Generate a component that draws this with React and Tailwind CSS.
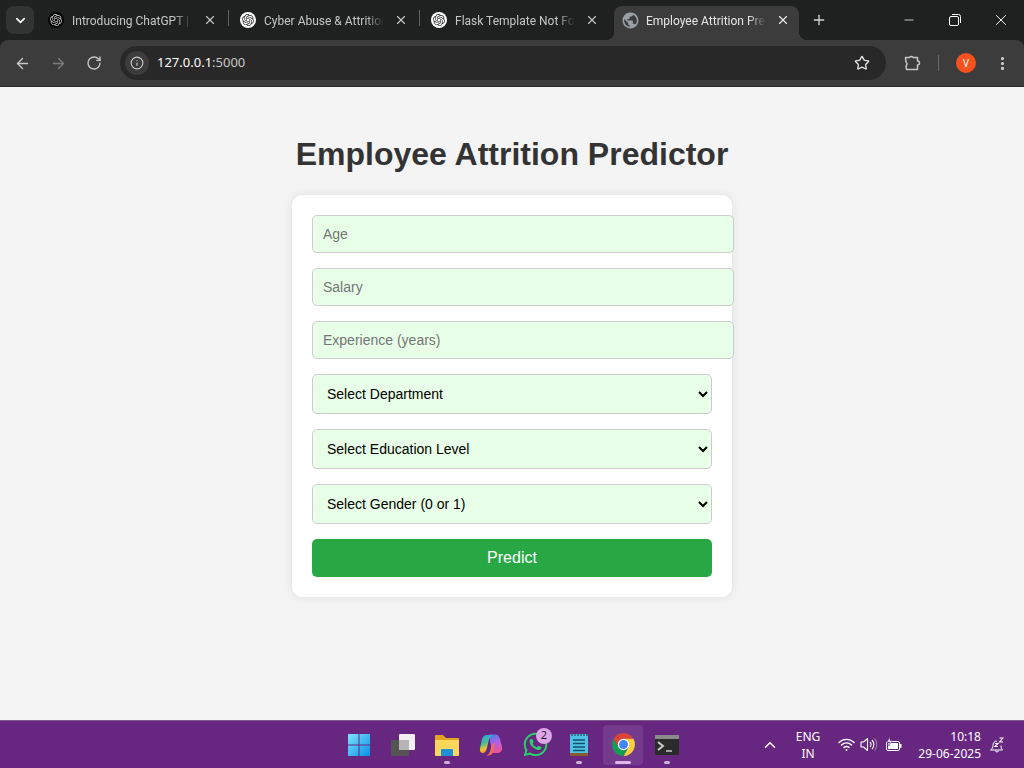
import { ArrowLeft, ArrowRight, RotateCw, Info, Star, EllipsisVertical, ChevronDown, ChevronUp, X, Plus, Minus } from 'lucide-react';
import { SiOpenai } from 'react-icons/si';
import { MdPublic } from 'react-icons/md';
import { FaWhatsapp } from 'react-icons/fa';

const tabs = [
  { title: 'Introducing ChatGPT | OpenAI', icon: 'dark', width: 'w-[192px]', gap: 'ml-[10px]', divider: true },
  { title: 'Cyber Abuse & Attrition Model', icon: 'light', width: 'w-[191px]', gap: 'ml-[9px]', divider: true },
  { title: 'Flask Template Not Found', icon: 'light', width: 'w-[191px]', gap: 'ml-[9px]' },
  { title: 'Employee Attrition Predictor', icon: 'globe', width: 'w-[185px]', gap: 'ml-[9px]', active: true },
];

function TabIcon({ type }) {
  if (type === 'globe') return <MdPublic size={19} className="text-[#9aa0a6] shrink-0 -mx-[1.5px]" />;
  return (
    <span className={`w-4 h-4 rounded-full flex items-center justify-center shrink-0 ${type === 'dark' ? 'bg-black text-[#c8c8c8]' : 'bg-white text-[#333]'}`}>
      <SiOpenai size={12} />
    </span>
  );
}

function Tab({ tab }) {
  return (
    <div className={`relative ${tab.width} h-[34px] flex items-center pl-2 pb-1.5 rounded-t-lg ${tab.active ? 'bg-[#3c3c3c] text-[#e6e6e6]' : 'text-[#c4c7c5]'}`}>
      {tab.active && <span className="absolute -left-2 bottom-0 w-2 h-2 bg-[radial-gradient(circle_at_0_0,transparent_8px,#3c3c3c_8px)]" />}
      {tab.active && <span className="absolute -right-2 bottom-0 w-2 h-2 bg-[radial-gradient(circle_at_100%_0,transparent_8px,#3c3c3c_8px)]" />}
      <TabIcon type={tab.icon} />
      <span className="ml-2 mt-px w-[120px] overflow-hidden whitespace-nowrap font-['Roboto',sans-serif] text-xs [mask-image:linear-gradient(to_right,black_85%,transparent)]">{tab.title}</span>
      <span className={`${tab.gap} w-4 flex justify-center`}><X size={14} strokeWidth={2} /></span>
      {tab.divider && <span className="absolute right-[3px] top-[4px] w-px h-4 bg-[#5f6368]" />}
    </div>
  );
}

function ChromeBar() {
  return (
    <div className="shrink-0 bg-[#1f2121] text-white font-['Noto_Sans',sans-serif]">
      <div className="h-10 flex items-end relative">
        <div className="w-10 h-10 flex items-start pl-1.5 pt-1.5">
          <div className="w-7 h-7 rounded-lg bg-[#323434] flex items-center justify-center"><ChevronDown size={15} strokeWidth={2.5} /></div>
        </div>
        {tabs.map((t) => <Tab key={t.title} tab={t} />)}
        <div className="ml-1 w-8 h-[34px] pb-1.5 flex items-center justify-center text-[#d4d4d4]"><Plus size={16} strokeWidth={2} /></div>
        <div className="ml-auto h-10 flex">
          <div className="w-[46px] flex items-center justify-center"><Minus size={14} strokeWidth={1.25} /></div>
          <div className="w-[46px] flex items-center justify-center">
            <svg width="12" height="12" viewBox="0 0 12 12" fill="none" stroke="white" strokeWidth="1"><rect x="0.5" y="2.5" width="9" height="9" rx="1.5" /><path d="M3 .5h6.5a2 2 0 0 1 2 2V9" /></svg>
          </div>
          <div className="w-[46px] flex items-center justify-center"><X size={18} strokeWidth={1.25} /></div>
        </div>
      </div>
      <div className="h-[47px] bg-[#3c3c3c] rounded-t-lg flex items-center pl-[6px] text-[#c7c7c7] border-b border-[#2a2a2a]">
        <div className="w-8 flex justify-center"><ArrowLeft size={17} /></div>
        <div className="ml-[2px] w-[36px] flex justify-center text-[#7b7b7b]"><ArrowRight size={17} /></div>
        <div className="w-[36px] flex justify-center"><RotateCw size={16} /></div>
        <div className="ml-2 w-[766px] h-[34px] rounded-full bg-[#282828] flex items-center pl-[5px] pr-4">
          <div className="w-6 h-6 rounded-full bg-[#3c3c3c] flex items-center justify-center"><Info size={14} /></div>
          <div className="ml-2 text-[13px] text-white">127.0.0.1<span className="text-[#c7c7c7]">:5000</span></div>
          <Star size={16} className="ml-auto text-[#e3e3e3]" />
        </div>
        <div className="ml-[17px] w-[18px] flex justify-center">
          <svg width="18" height="18" viewBox="0 0 18 18" fill="none" stroke="#c7c7c7" strokeWidth="1.5" strokeLinejoin="round"><path d="M2.500 3.500h4a2 2 0 0 1 3.500 0h4.500v3.500a2 2 0 0 1 0 4v4.500H3.500l-.5-3.500a2.500 2.500 0 0 0 0-4z" /></svg>
        </div>
        <div className="ml-[17px] w-px h-4 bg-[#6a6a6a]" />
        <div className="ml-[17px] w-5 h-5 rounded-full bg-[#f4511e] text-white text-[10px] flex items-center justify-center">V</div>
        <div className="ml-[17px] w-[18px] flex justify-center text-[#d0d0d0]"><EllipsisVertical size={17} strokeWidth={2.5} /></div>
      </div>
    </div>
  );
}

function PredictForm() {
  const inputClass = 'block w-[422px] h-[38px] px-[10px] border border-[#ccc] rounded-[5px] bg-[#e8ffe8] text-sm placeholder:text-[#757575] outline-none';
  const selectClass = 'block w-[400px] h-10 px-[10px] border border-[#ccc] rounded-[5px] bg-[#e8ffe8] text-sm text-black outline-none';
  return (
    <div className="flex-1 min-h-0 bg-[#f4f4f4] flex flex-col items-center pt-[47px] font-['Liberation_Sans',sans-serif]">
      <h1 className="text-[32px] leading-10 font-bold text-[#333] mb-[21px]">Employee Attrition Predictor</h1>
      <form className="w-[440px] p-5 bg-white rounded-[10px] shadow-[0_0_10px_rgba(0,0,0,0.1)] flex flex-col gap-[15px]">
        <input className={inputClass} placeholder="Age" />
        <input className={inputClass} placeholder="Salary" />
        <input className={inputClass} placeholder="Experience (years)" />
        <select className={selectClass}><option>Select Department</option></select>
        <select className={selectClass}><option>Select Education Level</option></select>
        <select className={selectClass}><option>Select Gender (0 or 1)</option></select>
        <button type="button" className="w-[400px] h-[38px] rounded-[5px] bg-[#28a745] text-white text-base">Predict</button>
      </form>
    </div>
  );
}

function TaskIcon({ children, mark, active }) {
  return (
    <div className={`relative w-10 h-10 mx-0.5 rounded flex items-center justify-center ${active ? 'bg-[#743a8b]' : ''}`}>
      {children}
      {mark === 'dot' && <span className="absolute bottom-[1px] w-[6px] h-[3px] rounded-full bg-[#c9b1d3]" />}
      {mark === 'line' && <span className="absolute bottom-[1px] w-4 h-[3px] rounded-full bg-[#e3b3ee]" />}
    </div>
  );
}

function Taskbar() {
  return (
    <div className="shrink-0 h-12 bg-[#67267f] border-t border-[#7c5a89] flex items-center text-white font-['Noto_Sans',sans-serif]">
      <div className="flex-1" />
      <div className="flex ml-[2px]">
        <TaskIcon>
          <svg width="24" height="24" viewBox="0 0 24 24"><defs><linearGradient id="wn" x1="0" y1="0" x2="1" y2="1"><stop offset="0" stopColor="#7fe3fb" /><stop offset="1" stopColor="#0a8fe8" /></linearGradient></defs><path fill="url(#wn)" d="M1 1h10.500v10.500H1zM12.500 1H23v10.500H12.500zM1 12.500h10.500V23H1zM12.500 12.500H23V23H12.500z" /></svg>
        </TaskIcon>
        <TaskIcon>
          <svg width="26" height="24" viewBox="0 0 26 24"><rect x="9" y="1" width="16" height="16" rx="1" fill="#f1f1f1" /><rect x="1" y="7" width="18" height="16" rx="1" fill="#555" /><rect x="9" y="7" width="10" height="10" fill="#b5b5b5" /></svg>
        </TaskIcon>
        <TaskIcon mark="dot">
          <svg width="26" height="24" viewBox="0 0 26 24"><path d="M1 3a1 1 0 0 1 1-1h7l3 3h12a1 1 0 0 1 1 1v3H1z" fill="#e2a520" /><path d="M1 7h24v15a1 1 0 0 1-1 1H2a1 1 0 0 1-1-1z" fill="#fbd75b" /><path d="M8 16h10a1 1 0 0 1 1 1v6H7v-6a1 1 0 0 1 1-1z" fill="#1f8fd6" /></svg>
        </TaskIcon>
        <TaskIcon>
          <svg width="24" height="24" viewBox="0 0 24 24">
            <defs>
              <linearGradient id="cpa" x1="0.2" y1="0" x2="0.5" y2="1"><stop offset="0" stopColor="#2aa8e0" /><stop offset=".45" stopColor="#45c08a" /><stop offset=".75" stopColor="#f7c32e" /><stop offset="1" stopColor="#f0803a" /></linearGradient>
              <linearGradient id="cpb" x1="0.3" y1="0" x2="0.6" y2="1"><stop offset="0" stopColor="#4f7cf0" /><stop offset=".5" stopColor="#b45ee8" /><stop offset="1" stopColor="#f0568c" /></linearGradient>
            </defs>
            <path fill="url(#cpb)" d="M10 1.500h6c2.500 0 4 1.500 4.800 4l2.200 8c.8 3.500-1 6.500-4.500 6.500H13z" />
            <path fill="url(#cpa)" d="M8 2h6c-2 .5-3.300 2-4 4.500l-2.500 10c-.6 2.300-2 3.500-3.500 3.500-2 0-3.500-2-3-5l2-8.500C3.500 3.500 5.500 2 8 2z" />
            <path fill="#f2705a" d="M7 22.500c2-.5 3.500-2 4-4l1.500-5.500c.5-2 2-3 3.500-3 0 .5-.5 1.500-1 3.500l-1.200 5c-.5 2.500-2 4-4.300 4z" />
          </svg>
        </TaskIcon>
        <TaskIcon>
          <FaWhatsapp size={27} className="text-[#25d366]" />
          <span className="absolute top-[3px] right-[3px] w-4 h-4 rounded-full bg-[#dca6e8] text-[#1d1d1d] text-[11px] flex items-center justify-center">2</span>
        </TaskIcon>
        <TaskIcon mark="dot">
          <svg width="20" height="24" viewBox="0 0 20 24"><rect x="1" y="1" width="18" height="22" rx="1" fill="#4ec3e6" /><rect x="1" y="20" width="18" height="3" fill="#8a5a2b" /><path d="M4 7h12M4 10.500h12M4 14h12M4 17.500h12" stroke="#16506a" strokeWidth="1.5" /><path d="M3 1v2M6 1v2M9 1v2M12 1v2M15 1v2M18 1v2" stroke="#17394a" strokeWidth="1" /></svg>
        </TaskIcon>
        <TaskIcon mark="line" active>
          <svg width="25" height="25" viewBox="0 0 48 48">
            <path fill="#db4437" d="M4.950 13A22 22 0 0 1 43.050 13H24L14.470 29.500z" />
            <path fill="#ffcd40" d="M43.050 13A22 22 0 0 1 24 46L33.530 29.500 24 13z" />
            <path fill="#0f9d58" d="M24 46A22 22 0 0 1 4.950 13L14.470 29.500H33.530z" />
            <circle cx="24" cy="24" r="11" fill="#fff" />
            <circle cx="24" cy="24" r="8.500" fill="#4285f4" />
          </svg>
        </TaskIcon>
        <TaskIcon mark="dot">
          <svg width="24" height="22" viewBox="0 0 24 22"><rect y="1" width="24" height="20" rx="1" fill="#2b2b2b" /><rect y="1" width="24" height="4" fill="#8a8a8a" /><path d="M3 8l5 4-5 4" stroke="#ccc" strokeWidth="2" fill="none" /><path d="M11 17h6" stroke="#ccc" strokeWidth="1.5" /></svg>
        </TaskIcon>
      </div>
      <div className="flex-1 flex items-center justify-end">
        <ChevronUp size={18} strokeWidth={2} />
        <div className="ml-[9px] w-[40px] text-xs leading-[17px] text-center">ENG<br />IN</div>
        <svg className="ml-[10px]" width="17" height="17" viewBox="0 0 17 17" fill="none" stroke="white" strokeWidth="1.400" strokeLinecap="round"><path d="M1 6.500a10.500 10.500 0 0 1 15 0M3.500 9a7 7 0 0 1 10 0M6 11.500a3.500 3.500 0 0 1 5 0" /><circle cx="8.500" cy="14" r="1" fill="white" stroke="none" /></svg>
        <svg className="ml-[5px]" width="17" height="17" viewBox="0 0 17 17" fill="none" stroke="white" strokeWidth="1.100"><path d="M1 6h2.500L7.500 2.500v12L3.500 11H1z" strokeLinejoin="round" /><path d="M10 6a3.500 3.500 0 0 1 0 5" /><path d="M12 4a6.500 6.500 0 0 1 0 9" /><path d="M14.500 2.500a9 9 0 0 1 0 12" stroke="#a57db5" /></svg>
        <svg className="ml-2" width="18" height="16" viewBox="0 0 18 16"><rect x="1.500" y="4.500" width="13" height="9" rx="1.500" fill="none" stroke="white" /><rect x="3" y="6" width="10" height="6" fill="white" /><rect x="15" y="7" width="1.500" height="4" fill="white" /><path d="M5 0L2 5h2.500L3.500 9 7.500 3.500H5z" fill="white" stroke="#67267f" strokeWidth="0.600" /></svg>
        <div className="ml-3 w-[66px] text-xs leading-[17px] text-right">10:18<br />29-06-2025</div>
        <svg className="ml-[8px] mr-[19px]" width="16" height="16" viewBox="0 0 16 16" fill="none" stroke="white"><path d="M1.500 13h12c-1-1-1.500-2-1.500-4.500M8 4a4 4 0 0 0-4 4.500c0 2-1 3.500-2.500 4.500M6.500 13.500a1.500 1.500 0 0 0 3 0" /><path d="M6 6.500h3l-3 3h3M10.500 1h3.500l-3.500 4h3.500" strokeWidth="1.100" /></svg>
      </div>
    </div>
  );
}

export default function App() {
  return (
    <div className="h-screen flex flex-col overflow-hidden">
      <ChromeBar />
      <PredictForm />
      <Taskbar />
    </div>
  );
}
